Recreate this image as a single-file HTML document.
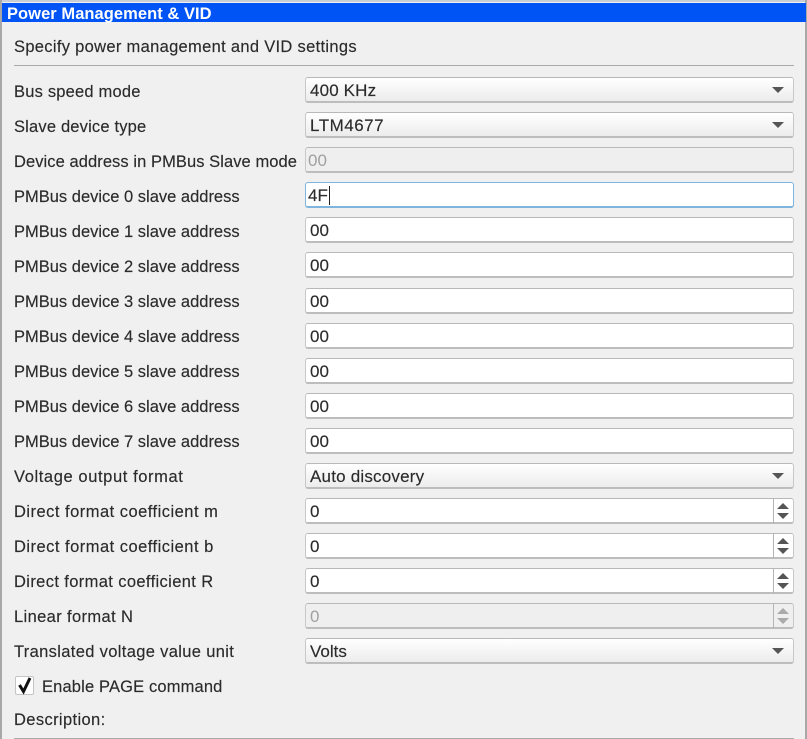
<!DOCTYPE html>
<html><head><meta charset="utf-8"><style>
html,body{margin:0;padding:0}
body{width:807px;height:739px;overflow:hidden;position:relative;background:#f0f0f0;font-family:"Liberation Sans",sans-serif;font-size:16.5px;color:#2b2b2b;-webkit-text-stroke:.15px #2b2b2b}
div{position:absolute;box-sizing:border-box}
.t{left:14px;height:20px;line-height:20px;margin-top:.5px;white-space:nowrap}
.c{left:305px;width:489px;height:26px;border:1px solid #c8c8c8;border-top-color:#b8b8b8;border-bottom:2px solid #bdbdbd;border-radius:3px;line-height:26px;padding-left:4px;white-space:nowrap;font-size:17px}
.s{background:linear-gradient(#fff,#ececec)}
.i{background:#fff}
.d{background:#efefef;color:#a0a0a0;padding-left:2px;-webkit-text-stroke:0}
.a{left:772px;width:0;height:0;border-left:6px solid transparent;border-right:6px solid transparent;border-top:6px solid #555}
.sp{left:773px;width:21px;height:26px;border-left:1px solid #b5b5b5}
.u,.w{left:777px;width:0;height:0;border-left:6px solid transparent;border-right:6px solid transparent}
.u{border-bottom:6px solid #555}.w{border-top:6px solid #555}
</style></head><body>
<div style="left:0;top:0;width:807px;height:2px;background:#c9ced6"></div>
<div style="left:0;top:0;width:2px;height:739px;background:#a8a8a8"></div>
<div style="left:805px;top:0;width:2px;height:739px;background:#a8a8a8"></div>
<div style="left:2px;top:3px;width:804px;height:19px;background:#0053f5;color:#fff;-webkit-text-stroke:0;font-weight:bold;font-size:16.5px;letter-spacing:.05px;line-height:22px;padding-left:5px">Power Management &amp; VID</div>
<div class="t" style="top:36px;letter-spacing:.31px">Specify power management and VID settings</div>
<div style="left:14px;top:65px;width:780px;height:1px;background:#aaa"></div>

<div class="t" style="top:81px;letter-spacing:.2px">Bus speed mode</div><div class="c s" style="top:77px;letter-spacing:.15px">400 KHz</div><div class="a" style="top:87px"></div>
<div class="t" style="top:116px;letter-spacing:.18px">Slave device type</div><div class="c s" style="top:112px;letter-spacing:.5px">LTM4677</div><div class="a" style="top:122px"></div>
<div class="t" style="top:151px;letter-spacing:.07px">Device address in PMBus Slave mode</div><div class="c d" style="top:147px">00</div>
<div class="t" style="top:186px">PMBus device 0 slave address</div><div class="c i" style="top:182px;border:1px solid #7fb4dc;border-bottom:2px solid #7fb4dc;padding-left:2px">4F<span style="border-left:1px solid #222;margin-left:1px"></span></div>
<div class="t" style="top:221px">PMBus device 1 slave address</div><div class="c i" style="top:217px">00</div>
<div class="t" style="top:256px">PMBus device 2 slave address</div><div class="c i" style="top:252px">00</div>
<div class="t" style="top:291px">PMBus device 3 slave address</div><div class="c i" style="top:288px">00</div>
<div class="t" style="top:326px">PMBus device 4 slave address</div><div class="c i" style="top:323px">00</div>
<div class="t" style="top:361px">PMBus device 5 slave address</div><div class="c i" style="top:358px">00</div>
<div class="t" style="top:396px">PMBus device 6 slave address</div><div class="c i" style="top:393px">00</div>
<div class="t" style="top:431px">PMBus device 7 slave address</div><div class="c i" style="top:428px">00</div>
<div class="t" style="top:466px;letter-spacing:.6px">Voltage output format</div><div class="c s" style="top:463px;letter-spacing:.2px">Auto discovery</div><div class="a" style="top:473px"></div>

<div class="t" style="top:501px;letter-spacing:.48px">Direct format coefficient m</div><div class="c i" style="top:498px">0</div>
<div class="sp" style="top:498px"></div><div class="u" style="top:503px"></div><div class="w" style="top:513px"></div>
<div class="t" style="top:536px;letter-spacing:.48px">Direct format coefficient b</div><div class="c i" style="top:533px">0</div>
<div class="sp" style="top:533px"></div><div class="u" style="top:538px"></div><div class="w" style="top:548px"></div>
<div class="t" style="top:571px;letter-spacing:.37px">Direct format coefficient R</div><div class="c i" style="top:568px">0</div>
<div class="sp" style="top:568px"></div><div class="u" style="top:573px"></div><div class="w" style="top:583px"></div>
<div class="t" style="top:606px;letter-spacing:.37px">Linear format N</div><div class="c d" style="top:603px;padding-left:4px">0</div>
<div class="sp" style="top:603px"></div><div class="u" style="top:608px;border-bottom-color:#aaa"></div><div class="w" style="top:618px;border-top-color:#aaa"></div>
<div class="t" style="top:641px;letter-spacing:.34px">Translated voltage value unit</div><div class="c s" style="top:638px">Volts</div><div class="a" style="top:648px"></div>

<div style="left:15px;top:676px;width:19px;height:19px;background:#fff;border:1px solid #c4c4c4;border-radius:2px"></div>
<svg style="position:absolute;left:15px;top:676px" width="19" height="19"><path d="M4.5 9 L8.5 15.5 L15 2" fill="none" stroke="#111" stroke-width="3"/></svg>
<div class="t" style="left:42px;top:676px;letter-spacing:.15px">Enable PAGE command</div>
<div class="t" style="top:709px;letter-spacing:.37px">Description:</div>
<div style="left:14px;top:738px;width:780px;height:1px;background:#aaa"></div>
</body></html>
